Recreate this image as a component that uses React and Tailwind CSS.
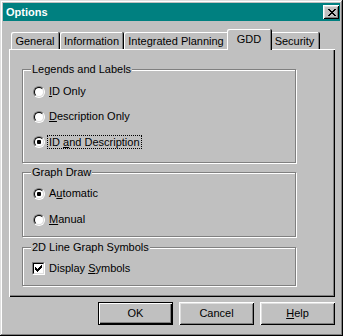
import { useState } from "react";

const bevelOut =
  "shadow-[inset_1px_1px_#fff,inset_-1px_-1px_#000,inset_2px_2px_#dfdfdf,inset_-2px_-2px_#808080]";

const CloseGlyph = () => (
  <svg width="8" height="7" viewBox="0 0 8 7" shapeRendering="crispEdges">
    <path
      fill="#000"
      d="M0 0h2v1H0z M6 0h2v1H6z M1 1h2v1H1z M5 1h2v1H5z M2 2h4v1H2z M3 3h2v1H3z M2 4h4v1H2z M1 5h2v1H1z M5 5h2v1H5z M0 6h2v1H0z M6 6h2v1H6z"
    />
  </svg>
);

const CheckGlyph = () => (
  <svg width="7" height="7" viewBox="0 0 7 7" shapeRendering="crispEdges">
    <path
      fill="#000"
      d="M6 0h1v1H6z M5 1h2v1H5z M0 2h1v1H0z M4 2h3v1H4z M0 3h2v1H0z M3 3h3v1H3z M0 4h5v1H0z M1 5h3v1H1z M2 6h1v1H2z"
    />
  </svg>
);

const Radio = ({ checked }) => (
  <div className="w-[12px] h-[12px] shrink-0 rounded-full border border-t-[#808080] border-l-[#808080] border-r-white border-b-white">
    <div className="w-full h-full rounded-full border border-t-black border-l-black border-r-[#dfdfdf] border-b-[#dfdfdf] bg-white flex items-center justify-center">
      {checked && <div className="w-[4px] h-[4px] rounded-[1px] bg-black" />}
    </div>
  </div>
);

const Checkbox = ({ checked }) => (
  <div className="w-[13px] h-[13px] shrink-0 border border-t-[#808080] border-l-[#808080] border-r-white border-b-white">
    <div className="w-full h-full border border-t-black border-l-black border-r-[#dfdfdf] border-b-[#dfdfdf] bg-white flex items-center justify-center">
      {checked && <CheckGlyph />}
    </div>
  </div>
);

const Group = ({ title, className, children }) => (
  <div
    className={
      "relative w-[274px] border border-[#808080] shadow-[inset_1px_1px_#fff,1px_1px_#fff] " +
      className
    }
  >
    <span className="absolute left-[8px] top-[-7px] px-[1px] bg-[#c0c0c0] leading-[13px]">
      {title}
    </span>
    {children}
  </div>
);

const Row = ({ control, children, onClick }) => (
  <div className="h-[13px] flex items-center gap-[4px]" onClick={onClick}>
    {control}
    {children}
  </div>
);

const tabs = [
  { name: "General", w: "w-[49px]" },
  { name: "Information", w: "w-[64px]" },
  { name: "Integrated Planning", w: "w-[105px]" },
  { name: "GDD", w: "w-[45px]", active: true },
  { name: "Security", w: "w-[50px]" },
];

const Button = ({ children, isDefault }) => (
  <button
    className={
      "w-[75px] h-[23px] bg-[#c0c0c0] flex items-center justify-center " +
      (isDefault
        ? "border border-black shadow-[inset_1px_1px_#fff,inset_-1px_-1px_#000,inset_-2px_-2px_#808080]"
        : bevelOut)
    }
  >
    {children}
  </button>
);

export default function App() {
  const [legend, setLegend] = useState(2);
  const [draw, setDraw] = useState(0);
  const [symbols, setSymbols] = useState(true);

  return (
    <div className="w-[343px] h-[336px] bg-[#c0c0c0] p-[3px] flex flex-col shadow-[inset_-1px_-1px_#000,inset_1px_1px_#dfdfdf,inset_-2px_-2px_#808080,inset_2px_2px_#fff] font-['Liberation_Sans',Arial,sans-serif] text-[11px] leading-[13px] text-black select-none">
      {/* title bar */}
      <div className="h-[18px] bg-[#008080] flex items-center justify-between pl-[3px] pr-[1px]">
        <span className="text-white font-bold">Options</span>
        <div className={"w-[16px] h-[14px] bg-[#c0c0c0] flex items-center justify-center pl-[1px] " + bevelOut}>
          <CloseGlyph />
        </div>
      </div>

      {/* tabs */}
      <div className="mt-[8px] h-[20px] flex items-end pl-[8px]">
        {tabs.map((t) =>
          t.active ? (
            <div
              key={t.name}
              className={
                t.w +
                " h-[21px] -mx-[2px] -mb-[1px] relative z-10 bg-[#c0c0c0] rounded-t-[2px] border-r border-black shadow-[inset_1px_1px_#fff,inset_-1px_0_#808080] flex items-start justify-center pt-[4px]"
              }
            >
              {t.name}
            </div>
          ) : (
            <div
              key={t.name}
              className={
                t.w +
                " h-[17px] rounded-t-[2px] border-r border-black shadow-[inset_1px_1px_#fff,inset_-1px_0_#808080] flex items-center justify-center pt-[1px] whitespace-nowrap"
              }
            >
              {t.name}
            </div>
          )
        )}
      </div>

      {/* panel */}
      <div className="ml-[6px] w-[326px] h-[248px] pt-[20px] pl-[13px] flex flex-col shadow-[inset_1px_1px_#fff,inset_-1px_-1px_#000,inset_-2px_-2px_#808080]">
        <Group title="Legends and Labels" className="h-[94px] pt-[15px] pl-[10px] flex flex-col gap-[12px]">
          <Row control={<Radio checked={legend === 0} />} onClick={() => setLegend(0)}>
            <span>
              <u>I</u>D Only
            </span>
          </Row>
          <Row control={<Radio checked={legend === 1} />} onClick={() => setLegend(1)}>
            <span>
              <u>D</u>escription Only
            </span>
          </Row>
          <Row control={<Radio checked={legend === 2} />} onClick={() => setLegend(2)}>
            <span className="-ml-[2px] px-[1px] border border-dotted border-black leading-[12px]">
              ID <u>a</u>nd Description
            </span>
          </Row>
        </Group>

        <Group title="Graph Draw" className="mt-[9px] h-[65px] pt-[14px] pl-[10px] flex flex-col gap-[13px]">
          <Row control={<Radio checked={draw === 0} />} onClick={() => setDraw(0)}>
            <span>
              A<u>u</u>tomatic
            </span>
          </Row>
          <Row control={<Radio checked={draw === 1} />} onClick={() => setDraw(1)}>
            <span>
              <u>M</u>anual
            </span>
          </Row>
        </Group>

        <Group title="2D Line Graph Symbols" className="mt-[10px] h-[39px] pt-[14px] pl-[9px]">
          <Row control={<Checkbox checked={symbols} />} onClick={() => setSymbols(!symbols)}>
            <span>
              Display <u>S</u>ymbols
            </span>
          </Row>
        </Group>
      </div>

      {/* buttons */}
      <div className="mt-[5px] flex justify-end gap-[6px] pr-[5px]">
        <Button isDefault>OK</Button>
        <Button>Cancel</Button>
        <Button>
          <span>
            <u>H</u>elp
          </span>
        </Button>
      </div>
    </div>
  );
}
